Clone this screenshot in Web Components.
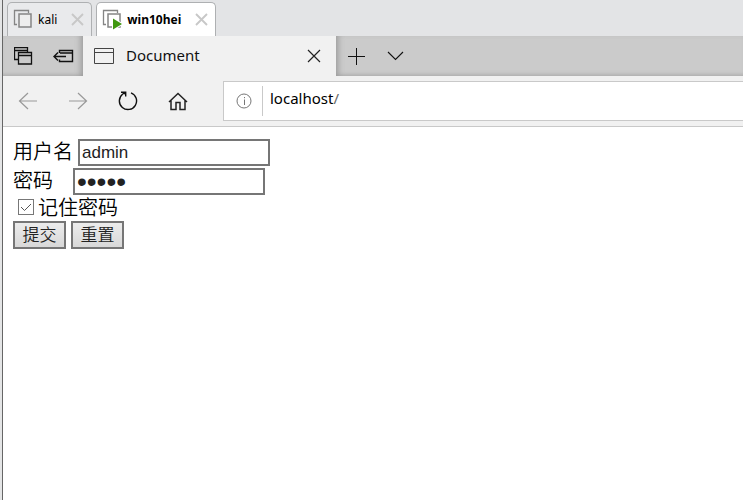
<!DOCTYPE html>
<html lang="zh">
<head>
<meta charset="utf-8">
<title>Document</title>
<style>
html, body { height: 100%; margin: 0; }
body { background: #fff; color: #000; font-family: "Noto Sans", "Noto Sans CJK SC", sans-serif; }
</style>
</head>
<body>
<vm-window>
  <vm-tabs slot="tabs">
    <vm-tab label="kali"></vm-tab>
    <vm-tab label="win10hei" active></vm-tab>
  </vm-tabs>
  <browser-tabs heading="Document"></browser-tabs>
  <browser-nav host="localhost" path="/"></browser-nav>
  <login-form></login-form>
</vm-window>
<script>
const define = (name, render) => customElements.define(name, class extends HTMLElement {
  constructor() { super(); this.attachShadow({ mode: "open" }); }
  connectedCallback() { this.shadowRoot.innerHTML = render(this); }
});
const reset = `*{box-sizing:border-box}button{border:0;background:none;padding:0;margin:0;font:inherit;color:inherit;display:flex;align-items:center;justify-content:center}svg{display:block;fill:none;flex:none}`;

define("vm-window", () => `<style>
:host{display:flex;flex-direction:column;min-height:100vh;box-sizing:border-box;border-left:2px solid #e4e5e6}
main{flex:1;border-left:1px solid #666;display:flex;flex-direction:column}
</style><main><slot name="tabs"></slot><slot></slot></main>`);

define("vm-tabs", () => `<style>
:host{display:flex;gap:4px;height:36px;box-sizing:border-box;padding:2px 4px 0;background:#e3e4e6}
</style><slot></slot>`);

define("vm-tab", el => {
  const on = el.hasAttribute("active");
  return `<style>${reset}
:host{display:flex;align-items:center;box-sizing:border-box;height:34px;padding:0 7px 0 6px;border:1px solid #aeb0b2;border-bottom:0;border-radius:5px 5px 0 0;background:#e9eaec;font-size:12px}
:host([active]){background:#fff;font-weight:700}
span{margin:0 14px 0 5px;line-height:18px}
</style>
<svg width="19" height="19" viewBox="0 0 19 19" overflow="visible"><path d="M3 14.500H.5V.5h14V3" stroke="#858585" stroke-width="1.300"/><rect x="5" y="4" width="12" height="13" stroke="#858585" stroke-width="1.500" fill="${on ? "#fff" : "#eee"}"/>${on ? '<path d="M10 8.500v11l9-5.500z" fill="#3f970f" stroke="#fff" stroke-width="2" paint-order="stroke"/>' : ""}</svg>
<span>${el.getAttribute("label")}</span>
<button aria-label="Close"><svg width="13" height="13" viewBox="0 0 13 13"><path d="M1 1l11 11m0-11l-11 11" stroke="#c8c8c8" stroke-width="1.900"/></svg></button>`;
});

define("browser-tabs", el => `<style>${reset}
:host{display:flex;height:40px;background:#cbcbcb;color:#111;box-shadow:inset 0 -4px 4px -3px #aaa}
.tools{display:flex;align-items:center;gap:20px;width:80px;padding-left:11px;box-shadow:inset -6px 0 6px -4px #999}
.tab{display:flex;align-items:center;width:253px;padding:0 15px 0 11px;background:#f1f1f1}
.tab span{flex:1;margin-left:11px;font-size:15px;line-height:20px;padding-bottom:2px}
.more{flex:1;display:flex;align-items:center;gap:22px;padding-left:12px;box-shadow:inset 6px 0 6px -4px #999}
</style>
<div class="tools">
<button aria-label="Tabs you've set aside"><svg width="19" height="18" viewBox="0 0 19 18" stroke="#111" stroke-width="1.300"><path d="M4 12.500H.5V.5h13V5M.5 3.500h13"/><path d="M4.500 5.500h13v11.500h-13zM4.500 8.500h13"/></svg></button>
<button aria-label="Set these tabs aside"><svg width="21" height="14" viewBox="0 0 21 14" stroke="#111" stroke-width="1.400"><path d="M6.500 4V1.500h13v11h-13V10.500M7 4h12.500M1 7.500h12M5 3.500l-4 4 4 4"/></svg></button>
</div>
<div class="tab"><svg width="21" height="17" viewBox="0 0 21 17" stroke="#444"><path d="M.5.5h19v15H.5zM.5 4.500h19"/></svg><span>${el.getAttribute("heading")}</span>
<button aria-label="Close tab"><svg width="14" height="14" viewBox="0 0 14 14" stroke="#222"><path d="M1 1l12 12M13 1L1 13" stroke-width="1.200"/></svg></button></div>
<div class="more"><button aria-label="New tab"><svg width="17" height="17" viewBox="0 0 17 17" stroke="#111"><path d="M8.500 0v17M0 8.500h17"/></svg></button>
<button aria-label="Tab previews"><svg width="17" height="10" viewBox="0 0 17 10" stroke="#111"><path d="M1 1l7.500 7.500L16 1" stroke-width="1.100"/></svg></button></div>`);

define("browser-nav", el => `<style>${reset}
:host{display:flex;height:51px;box-sizing:border-box;border-bottom:1px solid #c9c9c9;background:#f1f1f1}
nav{display:flex;align-items:center;width:220px;padding-left:10px}
nav button{width:30px;height:30px;margin-right:20px}
.address{flex:1;display:flex;align-items:center;height:40px;margin-top:5px;padding-left:12px;border:1px solid #c9c9c9;border-right:0;background:#fff}
.url{border-left:1px solid #c9c9c9;margin-left:10px;padding:2px 0 8px 7px;font-size:15px;line-height:20px}
i{font-style:normal;color:#666}
</style>
<nav>
<button aria-label="Back"><svg width="20" height="19" viewBox="0 0 20 19" stroke="#999"><path d="M10 1L1.500 9 10 17M1 9h18" stroke-width="1.200"/></svg></button>
<button aria-label="Forward"><svg width="20" height="19" viewBox="0 0 20 19" stroke="#999"><path d="M10 1l8.500 8L10 17M19 9H1" stroke-width="1.200"/></svg></button>
<button aria-label="Refresh"><svg width="20" height="20" viewBox="0 0 20 20" stroke="#111" stroke-width="1.400"><path d="M13 1.900A8.600 8.600 0 1 1 4.500 3.300L7.300 1.300M3 1.200H7.700V5.500"/><path d="M4.500 1.200H7.700V4.500z" fill="#111" stroke="none"/></svg></button>
<button aria-label="Home"><svg width="20" height="19" viewBox="0 0 20 19" stroke="#222" stroke-width="1.500"><path d="M1 10l9-8.500L19 10M3 8v9.500h5v-7h4v7h5V8"/></svg></button>
</nav>
<div class="address"><svg width="16" height="16" viewBox="0 0 16 16" stroke="#777"><circle cx="8" cy="8" r="7"/><path d="M8.500 6.500V12M8.500 4v1.200"/></svg><div class="url">${el.getAttribute("host")}<i>${el.getAttribute("path")}</i></div></div>`);

define("login-form", () => `<style>
*{box-sizing:border-box}
:host{display:block;padding:11px 10px;font:350 20px/28px "Noto Sans CJK SC",sans-serif}
form{display:flex;flex-direction:column}
label{padding-bottom:4px}
.row{display:flex;align-items:center;gap:5px;height:29px}
.pass label{width:55px}
.row input{width:192px;height:27px;margin:0;padding:0 2px;border:2px solid #767676;border-radius:0;background:#fff;color:#222;font:17px "Liberation Sans",sans-serif;outline:0}
.row input[type=password]{font-size:28px}
.check{display:flex;align-items:center;gap:4px;height:25px;padding-left:5px}
.check input{appearance:none;width:16px;height:16px;margin:0 0 3px;border:1px solid #777;background:#fff url("data:image/svg+xml,%3Csvg xmlns='http://www.w3.org/2000/svg' viewBox='0 0 14 14'%3E%3Cpath d='M2 7l3.500 3.500L12 4' fill='none' stroke='%23555'/%3E%3C/svg%3E")}
.actions{display:flex;gap:5px}
.actions button{width:53px;height:28px;padding:0 0 2px;border:2px solid #767676;border-radius:0;background:linear-gradient(#ececec,#d8d8d8);color:#222;font:350 17px/22px "Noto Sans CJK SC",sans-serif}
</style>
<form>
<div class="row"><label for="user">用户名</label><input id="user" type="text" value="admin"></div>
<div class="row pass"><label for="pw">密码</label><input id="pw" type="password" value="admin"></div>
<div class="check"><input id="keep" type="checkbox" checked><label for="keep">记住密码</label></div>
<div class="actions"><button type="submit">提交</button><button type="reset">重置</button></div>
</form>`);
</script>
</body>
</html>
